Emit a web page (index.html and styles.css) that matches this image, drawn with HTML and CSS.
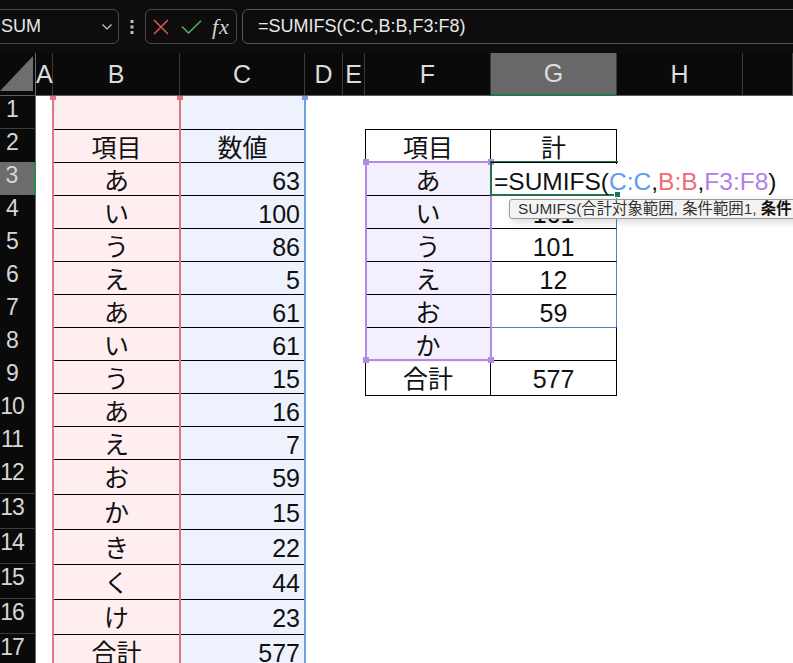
FILE: index.html
```html
<!DOCTYPE html>
<html lang="ja">
<head>
  <meta charset="UTF-8">
  <title>SUMIFS</title>
  <link rel="stylesheet" href="styles.css">
</head>
<body>

  <div class="bar">
    <div class="namebox">
      <span>SUM</span>
      <svg width="10" height="6" viewBox="0 0 10 6"><path d="M0.5 0.5 L5 5 L9.5 0.5" fill="none" stroke="#cfcfcf" stroke-width="1.2"/></svg>
    </div>
    <div class="grip">
      <svg width="4" height="14" viewBox="0 0 4 14"><rect x="0.5" y="0" width="3" height="3" fill="#bdbdbd"/><rect x="0.5" y="5.5" width="3" height="3" fill="#bdbdbd"/><rect x="0.5" y="11" width="3" height="3" fill="#bdbdbd"/></svg>
    </div>
    <div class="fxbox">
      <svg width="16" height="16" viewBox="0 0 16 16"><path d="M1 1 L15 15 M15 1 L1 15" stroke="#d9534f" stroke-width="1.6"/></svg>
      <svg class="ok" width="21" height="14" viewBox="0 0 21 14"><path d="M1 6.5 L7.5 13 L20 0.8" fill="none" stroke="#4cae5c" stroke-width="1.6"/></svg>
      <i class="fx">fx</i>
    </div>
    <div class="formula">=SUMIFS(C:C,B:B,F3:F8)</div>
  </div>

  <div class="sheet">
    <div class="hdr">
      <div class="corner"><svg width="33" height="35" viewBox="0 0 33 35"><polygon points="0,35 33,35 33,0" fill="#6e6e6e"/></svg></div>
      <div class="col-a">A</div>
      <div>B</div>
      <div>C</div>
      <div>D</div>
      <div>E</div>
      <div>F</div>
      <div class="on">G</div>
      <div>H</div>
      <div></div>
    </div>

    <div class="row">
      <div class="rh">1</div><div></div><div class="b"></div><div class="c"></div><div></div><div></div><div></div><div></div>
    </div>
    <div class="row">
      <div class="rh">2</div><div></div><div class="b t">項目</div><div class="c t ctr">数値</div><div></div><div></div><div class="f t">項目</div><div class="g t">計</div>
    </div>
    <div class="row">
      <div class="rh on">3</div><div></div><div class="b t">あ</div><div class="c t">63</div><div></div><div></div><div class="f t sel">あ</div><div class="g t edit">=SUMIFS(<span class="ref-c">C:C</span>,<span class="ref-b">B:B</span>,<span class="ref-f">F3:F8</span>)</div>
    </div>
    <div class="row">
      <div class="rh">4</div><div></div><div class="b t">い</div><div class="c t">100</div><div></div><div></div><div class="f t sel">い</div><div class="g t blu">161</div>
    </div>
    <div class="row">
      <div class="rh">5</div><div></div><div class="b t">う</div><div class="c t">86</div><div></div><div></div><div class="f t sel">う</div><div class="g t blu">101</div>
    </div>
    <div class="row">
      <div class="rh">6</div><div></div><div class="b t">え</div><div class="c t">5</div><div></div><div></div><div class="f t sel">え</div><div class="g t blu">12</div>
    </div>
    <div class="row">
      <div class="rh">7</div><div></div><div class="b t">あ</div><div class="c t">61</div><div></div><div></div><div class="f t sel">お</div><div class="g t blu">59</div>
    </div>
    <div class="row">
      <div class="rh">8</div><div></div><div class="b t">い</div><div class="c t">61</div><div></div><div></div><div class="f t sel">か</div><div class="g t blu-top"></div>
    </div>
    <div class="row">
      <div class="rh">9</div><div></div><div class="b t">う</div><div class="c t">15</div><div></div><div></div><div class="f t end">合計</div><div class="g t end">577</div>
    </div>
    <div class="row">
      <div class="rh">10</div><div></div><div class="b t">あ</div><div class="c t">16</div>
    </div>
    <div class="row">
      <div class="rh">11</div><div></div><div class="b t">え</div><div class="c t">7</div>
    </div>
    <div class="row tall">
      <div class="rh">12</div><div></div><div class="b t">お</div><div class="c t">59</div>
    </div>
    <div class="row tall">
      <div class="rh">13</div><div></div><div class="b t">か</div><div class="c t">15</div>
    </div>
    <div class="row tall">
      <div class="rh">14</div><div></div><div class="b t">き</div><div class="c t">22</div>
    </div>
    <div class="row tall">
      <div class="rh">15</div><div></div><div class="b t">く</div><div class="c t">44</div>
    </div>
    <div class="row tall">
      <div class="rh">16</div><div></div><div class="b t">け</div><div class="c t">23</div>
    </div>
    <div class="row tall">
      <div class="rh">17</div><div></div><div class="b t">合計</div><div class="c t">577</div>
    </div>

    <!-- range highlights while editing the formula -->
    <div class="range range-c"><span class="knob kr"></span></div>
    <div class="range range-b"><span class="knob kl"></span><span class="knob kr"></span></div>
    <div class="range range-f">
      <span class="knob tl"></span><span class="knob tr"></span><span class="knob bl"></span><span class="knob br"></span>
    </div>
    <div class="active"><span class="fill"></span></div>

    <div class="tip">SUMIFS(合計対象範囲, 条件範囲1, <b>条件</b></div>
  </div>

</body>
</html>
```

FILE: styles.css
```css
body {
  margin: 0;
  background: #ffffff;
  overflow: hidden;
  font-family: "Liberation Sans", "Noto Sans CJK JP", sans-serif;
  color: #111;
}

/* formula bar */
.bar {
  height: 53px;
  box-sizing: border-box;
  padding-top: 9px;
  background: #0d0d0d;
  display: flex;
  align-items: flex-start;
}
.namebox {
  margin-left: -12px;
  width: 131px;
  height: 35px;
  box-sizing: border-box;
  border: 1px solid #4a4a4a;
  border-radius: 6px;
  padding: 0 6px 0 12px;
  display: flex;
  align-items: center;
  justify-content: space-between;
  color: #e6e6e6;
  font-size: 18px;
}
.grip {
  width: 26px;
  height: 35px;
  display: flex;
  align-items: center;
  justify-content: center;
}
.fxbox {
  width: 92px;
  height: 35px;
  box-sizing: border-box;
  border: 1px solid #4a4a4a;
  border-radius: 6px;
  padding-left: 7px;
  display: flex;
  align-items: center;
}
.fxbox .ok {
  margin-left: 12px;
}
.fx {
  margin-left: 10px;
  font-family: "Liberation Serif", serif;
  font-size: 22px;
  color: #d4d4d4;
  letter-spacing: 1px;
}
.formula {
  margin-left: 5px;
  margin-right: -20px;
  flex: 1;
  height: 35px;
  box-sizing: border-box;
  border: 1px solid #555;
  border-radius: 6px;
  padding-left: 15px;
  line-height: 33px;
  font-size: 18px;
  color: #e8e8e8;
}

/* sheet */
.sheet {
  position: relative;
  height: 610px;
  overflow: hidden;
}
.hdr, .row {
  display: grid;
  grid-template-columns: 36px 17px 127px 125px 38px 22px 126px 126px 126px 1fr;
}
.hdr {
  height: 43px;
  background: #0a0a0a;
}
.hdr div {
  box-sizing: border-box;
  border-right: 1px solid #3a3a3a;
  border-bottom: 1px solid #5a5a5a;
  display: flex;
  align-items: center;
  justify-content: center;
  color: #dcdcdc;
  font-size: 25px;
}
.hdr .corner {
  align-items: flex-end;
  justify-content: flex-start;
  padding-bottom: 4px;
  border-right-color: #6a6a6a;
}
.hdr .col-a {
  justify-content: flex-start;
}
.hdr .on {
  background: #686868;
  border-bottom: 2px solid #22754a;
}

.row {
  height: 33px;
}
.row.tall {
  height: 35px;
}
.row div {
  box-sizing: border-box;
  font-size: 25px;
  line-height: 31px;
  padding-top: 3px;
  white-space: nowrap;
}
.row .rh {
  background: #0a0a0a;
  color: #d6d6d6;
  border-bottom: 1px solid #3c3c3c;
  border-right: 1px solid #6a6a6a;
  padding: 1px 11px 0 0;
  line-height: 24px;
  font-size: 23px;
  letter-spacing: -1px;
  display: flex;
  justify-content: center;
}
.row .rh.on {
  background: #6c6c6c;
  border-right: 2px solid #2a8a55;
}

.b {
  background: #ffeef0;
  text-align: center;
}
.c {
  background: #edf2fc;
  text-align: right;
  padding-right: 5px;
}
.ctr {
  text-align: center;
  padding-right: 0;
}
.t {
  border-top: 1px solid #000;
}
.f {
  border-left: 1px solid #000;
  border-right: 1px solid #000;
  text-align: center;
}
.f.sel {
  background: #f4effd;
}
.g {
  border-right: 1px solid #000;
  text-align: center;
}
.end {
  border-bottom: 1px solid #000;
}
.blu {
  border-right-color: #4f7fc4;
}
.blu-top {
  border-top-color: #4f7fc4;
}
.row .edit {
  text-align: left;
  padding-left: 3px;
  border-right: none;
  font-size: 24.5px;
  overflow: visible;
  position: relative;
  z-index: 3;
}
.ref-c { color: #5b9cf0; }
.ref-b { color: #ee6b74; }
.ref-f { color: #b37de9; }

/* coloured range outlines */
.range {
  position: absolute;
  box-sizing: border-box;
}
.range-c {
  left: 179px;
  top: 43px;
  bottom: 0;
  width: 127px;
  border-left: 2px solid #71a0dc;
  border-right: 2px solid #71a0dc;
}
.range-b {
  left: 52px;
  top: 43px;
  bottom: 0;
  width: 129px;
  border-left: 2px solid #e0767e;
  border-right: 2px solid #e0767e;
}
.range-f {
  left: 365px;
  top: 108px;
  width: 127px;
  height: 200px;
  border: 2px solid #b48ae8;
}
.knob {
  position: absolute;
  width: 6px;
  height: 6px;
}
.range-c .knob { background: #71a0dc; top: 0; height: 4px; }
.range-b .knob { background: #e0767e; top: 0; height: 4px; }
.range-f .knob { background: #b48ae8; }
.range-c .kr, .range-b .kr { right: -4px; }
.range-b .kl { left: -4px; }
.range-f .tl { left: -4px; top: -4px; }
.range-f .tr { right: -4px; top: -4px; }
.range-f .bl { left: -4px; bottom: -4px; }
.range-f .br { right: -4px; bottom: -4px; }

.active {
  position: absolute;
  left: 490px;
  top: 108px;
  width: 128px;
  height: 35px;
  box-sizing: border-box;
  border: 2px solid #22754a;
  border-right: none;
  z-index: 2;
}
.active .fill {
  position: absolute;
  right: -3px;
  bottom: -4px;
  width: 5px;
  height: 5px;
  background: #22754a;
  border: 1px solid #fff;
}

.tip {
  position: absolute;
  left: 509px;
  top: 146px;
  right: -30px;
  height: 20px;
  box-sizing: border-box;
  border: 1px solid #9a9a9a;
  border-radius: 3px;
  background: #f3f3f3;
  box-shadow: 2px 3px 8px rgba(0, 0, 0, 0.15);
  padding-left: 8px;
  font-size: 15.4px;
  line-height: 18px;
  color: #333;
  white-space: nowrap;
  z-index: 4;
}
.tip b {
  color: #111;
}
```
